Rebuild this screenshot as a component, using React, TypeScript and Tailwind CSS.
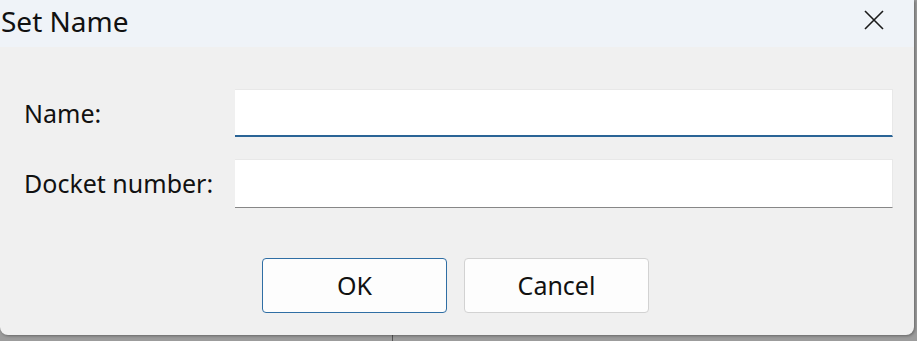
import React from "react";

export default function App() {
  const font = { fontFamily: '"Noto Sans", "Open Sans", sans-serif' };
  return (
    <div className="w-[917px] h-[341px] bg-[#9c9c9c] overflow-hidden flex flex-col" style={font}>
      <div className="w-[914px] h-[335px] shrink-0 bg-[#f0f0f0] rounded-b-[8px] flex flex-col overflow-hidden shadow-[1px_1px_3px_rgba(0,0,0,0.35)] relative z-10">
        <div className="h-[47px] bg-[#eff3f8] flex items-center justify-between shrink-0">
          <span className="pl-[1px] text-[28px] leading-none text-[#111] -mt-[6px]">Set Name</span>
          <svg width="20" height="20" viewBox="0 0 20 20" className="mr-[30px] -mt-[7px]">
            <path d="M1 1 L19 19 M19 1 L1 19" stroke="#1a1a1a" strokeWidth="1.6" />
          </svg>
        </div>
        <div className="flex flex-col pt-[42px] pl-[24px] pr-[21px]">
          <div className="flex items-center h-[48px]">
            <span className="w-[211px] text-[25px] text-[#111] leading-none">Name:</span>
            <div className="flex-1 h-[48px] bg-white border-t border-r border-[#e8e8e8] border-b-2 border-b-[#2a6496]" />
          </div>
          <div className="flex items-center h-[49px] mt-[22px]">
            <span className="w-[211px] text-[25px] text-[#111] leading-none">Docket number:</span>
            <div className="flex-1 h-[49px] bg-white border-t border-r border-[#e8e8e8] border-b border-b-[#878787]" />
          </div>
          <div className="flex justify-start gap-[17px] mt-[50px] pl-[238px]">
            <button className="w-[185px] h-[55px] bg-[#fdfdfd] border border-[#2f6ea4] rounded-[4px] text-[25px] text-[#111]">OK</button>
            <button className="w-[185px] h-[55px] bg-[#fdfdfd] border border-[#d2d2d2] rounded-[4px] text-[25px] text-[#111]">Cancel</button>
          </div>
        </div>
      </div>
      <div className="flex-1 flex">
        <div className="ml-[392px] w-px bg-[#555]" />
      </div>
    </div>
  );
}
